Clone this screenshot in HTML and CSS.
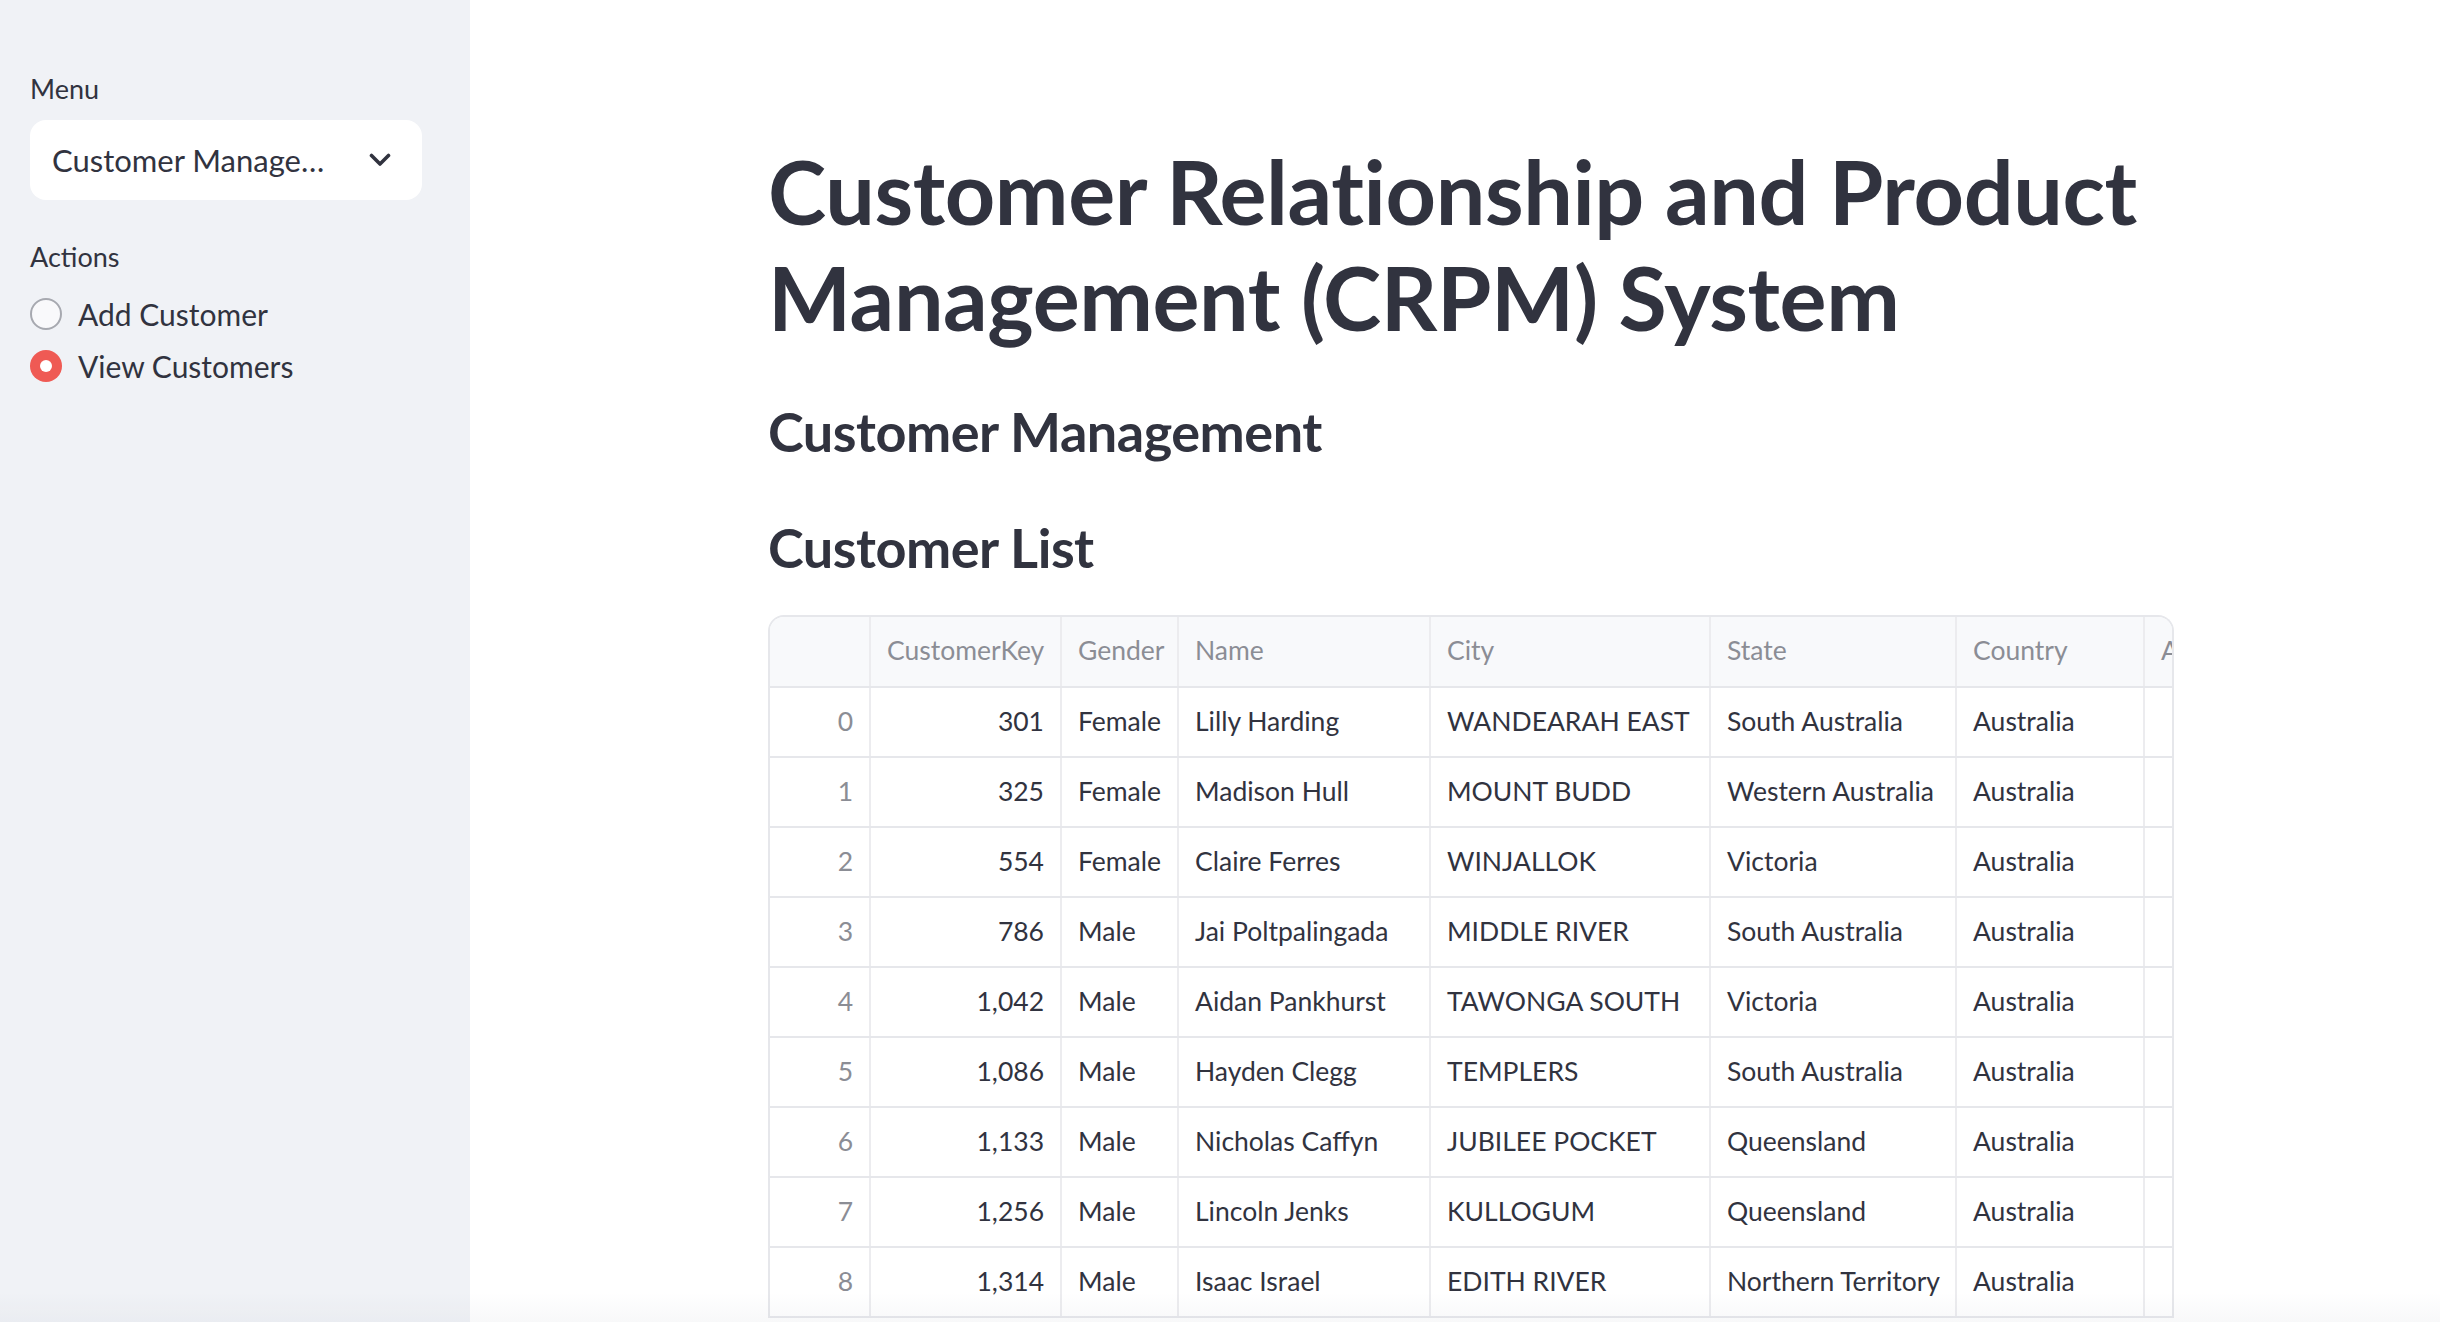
FILE: index.html
```html
<!DOCTYPE html>
<html lang="en">
<head>
<meta charset="utf-8">
<title>CRPM System</title>
<link rel="stylesheet" href="styles.css">
</head>
<body>
<div class="app">
  <aside class="sidebar">
    <div class="field-label">Menu</div>
    <div class="select">
      <span class="select-value">Customer Manage…</span>
      <svg class="chev" width="22" height="14" viewBox="0 0 22 14"><path d="M2.5 2.5 L11 11 L19.5 2.5" fill="none" stroke="#31333f" stroke-width="3.6" stroke-linecap="round" stroke-linejoin="round"/></svg>
    </div>
    <div class="field-label actions-label">Actions</div>
    <div class="radio-group">
      <div class="radio"><span class="dot"></span><span class="radio-text">Add Customer</span></div>
      <div class="radio checked"><span class="dot"></span><span class="radio-text">View Customers</span></div>
    </div>
  </aside>
  <main class="main">
    <div class="content">
      <h1 class="title">Customer Relationship and Product Management (CRPM) System</h1>
      <h2 class="subtitle">Customer Management</h2>
      <h3 class="section">Customer List</h3>
      <div class="grid-wrap">
        <table class="grid">
          <colgroup>
            <col class="c-idx"><col class="c-key"><col class="c-gender"><col class="c-name"><col class="c-city"><col class="c-state"><col class="c-country"><col class="c-extra">
          </colgroup>
          <thead>
            <tr><th></th><th>CustomerKey</th><th>Gender</th><th>Name</th><th>City</th><th>State</th><th>Country</th><th>Age</th></tr>
          </thead>
          <tbody>
            <tr><td class="idx">0</td><td class="num">301</td><td>Female</td><td>Lilly Harding</td><td>WANDEARAH EAST</td><td>South Australia</td><td>Australia</td><td></td></tr>
            <tr><td class="idx">1</td><td class="num">325</td><td>Female</td><td>Madison Hull</td><td>MOUNT BUDD</td><td>Western Australia</td><td>Australia</td><td></td></tr>
            <tr><td class="idx">2</td><td class="num">554</td><td>Female</td><td>Claire Ferres</td><td>WINJALLOK</td><td>Victoria</td><td>Australia</td><td></td></tr>
            <tr><td class="idx">3</td><td class="num">786</td><td>Male</td><td>Jai Poltpalingada</td><td>MIDDLE RIVER</td><td>South Australia</td><td>Australia</td><td></td></tr>
            <tr><td class="idx">4</td><td class="num">1,042</td><td>Male</td><td>Aidan Pankhurst</td><td>TAWONGA SOUTH</td><td>Victoria</td><td>Australia</td><td></td></tr>
            <tr><td class="idx">5</td><td class="num">1,086</td><td>Male</td><td>Hayden Clegg</td><td>TEMPLERS</td><td>South Australia</td><td>Australia</td><td></td></tr>
            <tr><td class="idx">6</td><td class="num">1,133</td><td>Male</td><td>Nicholas Caffyn</td><td>JUBILEE POCKET</td><td>Queensland</td><td>Australia</td><td></td></tr>
            <tr><td class="idx">7</td><td class="num">1,256</td><td>Male</td><td>Lincoln Jenks</td><td>KULLOGUM</td><td>Queensland</td><td>Australia</td><td></td></tr>
            <tr><td class="idx">8</td><td class="num">1,314</td><td>Male</td><td>Isaac Israel</td><td>EDITH RIVER</td><td>Northern Territory</td><td>Australia</td><td></td></tr>
          </tbody>
        </table>
      </div>
    </div>
  </main>
</div>
<div class="fade"></div>
</body>
</html>
```

FILE: styles.css
```css
html, body {
  margin: 0;
  padding: 0;
  height: 100%;
  overflow: hidden;
  background: #ffffff;
  color: #31333f;
  font-family: Lato, "Liberation Sans", sans-serif;
}

.app {
  display: flex;
  height: 1322px;
}

.sidebar {
  width: 470px;
  flex: none;
  box-sizing: border-box;
  background: #f0f2f6;
  padding: 68px 48px 0 30px;
}

.field-label {
  font-size: 27px;
  line-height: 42px;
}

.select {
  margin-top: 10px;
  width: 392px;
  height: 80px;
  box-sizing: border-box;
  background: #ffffff;
  border-radius: 16px;
  display: flex;
  align-items: center;
  justify-content: space-between;
  padding: 0 31px 0 22px;
  font-size: 31px;
}

.chev {
  display: block;
}

.actions-label {
  margin-top: 36px;
}

.radio-group {
  margin-top: 12px;
  display: flex;
  flex-direction: column;
  gap: 4px;
}

.radio {
  display: flex;
  align-items: center;
  gap: 16px;
  height: 48px;
  font-size: 30px;
}

.radio-text {
  padding-bottom: 1px;
}

.dot {
  width: 32px;
  height: 32px;
  box-sizing: border-box;
  border-radius: 50%;
  border: 2px solid #a7a9b0;
  background: #f9f9fb;
  flex: none;
  display: flex;
  align-items: center;
  justify-content: center;
}

.radio.checked .dot {
  border: none;
  background: #ef5a54;
}

.radio.checked .dot::after {
  content: "";
  width: 12px;
  height: 12px;
  border-radius: 50%;
  background: #ffffff;
}

.main {
  flex: 1;
  min-width: 0;
  padding: 138px 0 0 298px;
}

.content {
  width: 1406px;
}

.title {
  margin: 0;
  font-size: 88px;
  line-height: 106px;
  font-weight: 700;
  letter-spacing: -0.4px;
}

.subtitle {
  margin: 49px 0 0;
  font-size: 54px;
  line-height: 66px;
  font-weight: 700;
  letter-spacing: -0.5px;
}

.section {
  margin: 50px 0 0;
  font-size: 54px;
  line-height: 66px;
  font-weight: 700;
  letter-spacing: -0.5px;
}

.grid-wrap {
  margin-top: 34px;
  width: 1406px;
  box-sizing: border-box;
  border: 2px solid #e6e7eb;
  border-bottom: none;
  border-radius: 16px 16px 0 0;
  overflow: hidden;
}

.grid {
  table-layout: fixed;
  border-collapse: collapse;
  width: 1524px;
  font-size: 26.5px;
}

.c-idx { width: 100px; }
.c-key { width: 191px; }
.c-gender { width: 117px; }
.c-name { width: 252px; }
.c-city { width: 280px; }
.c-state { width: 246px; }
.c-country { width: 188px; }
.c-extra { width: 150px; }

.grid th,
.grid td {
  height: 70px;
  box-sizing: border-box;
  padding: 0 16px 3px;
  white-space: nowrap;
  overflow: hidden;
  text-align: left;
  border-right: 2px solid #ececef;
  border-bottom: 2px solid #e6e7eb;
  font-weight: 400;
}

.grid th {
  background: #f8f9fb;
  color: #8b8d95;
}

.grid td.idx {
  color: #8b8d95;
  text-align: right;
}

.grid td.num {
  text-align: right;
}

.fade {
  position: fixed;
  left: 0;
  right: 0;
  bottom: 0;
  height: 32px;
  background: linear-gradient(rgba(240, 242, 246, 0), rgba(200, 204, 212, 0.12));
  pointer-events: none;
}
```
